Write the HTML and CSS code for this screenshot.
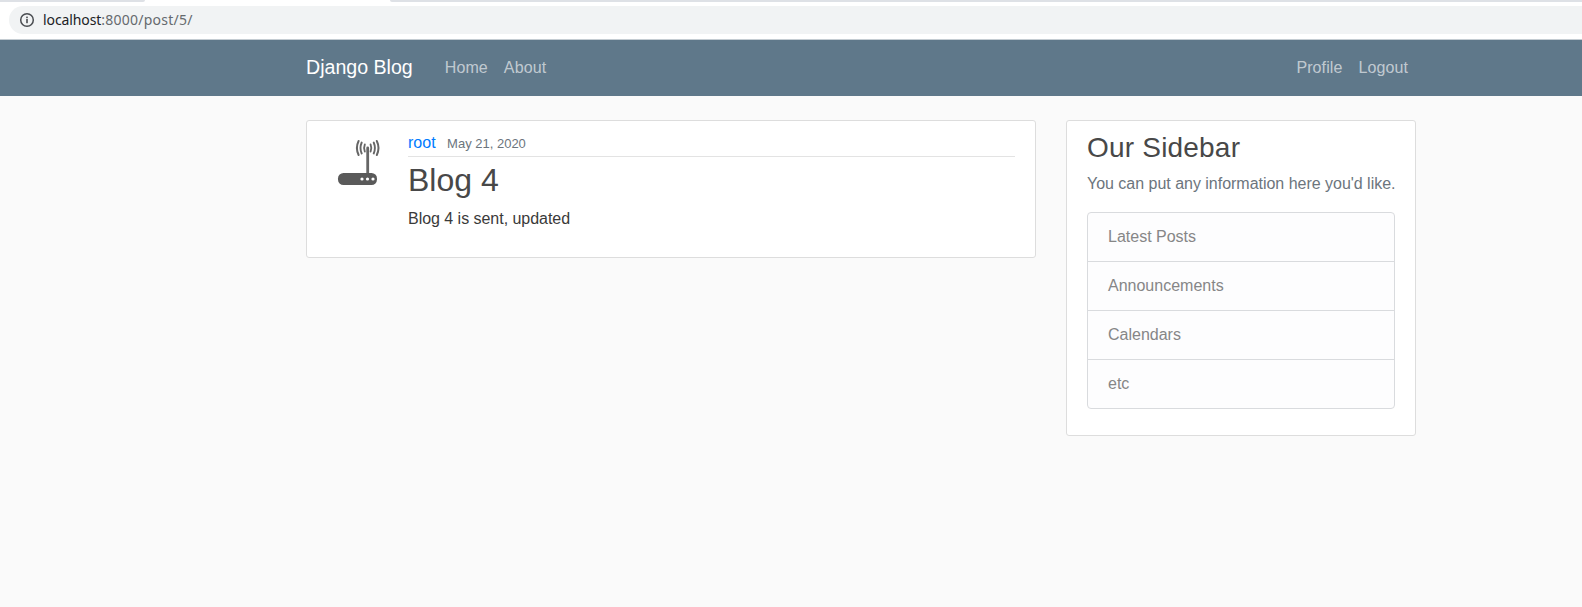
FILE: index.html
```html
<!DOCTYPE html>
<html lang="en">
<head>
<meta charset="utf-8">
<title>Django Blog</title>
<link rel="stylesheet" href="styles.css">
</head>
<body>
<div class="browser">
  <div class="tabstrip"><div class="tab-left"></div><div class="tab-active"></div><div class="tab-right"></div></div>
  <div class="addressbar">
    <svg class="info" width="16" height="16" viewBox="0 0 16 16"><circle cx="8" cy="8" r="6.3" fill="none" stroke="#4a4d51" stroke-width="1.5"/><rect x="7.2" y="7" width="1.6" height="4.2" fill="#4a4d51"/><rect x="7.2" y="4.6" width="1.6" height="1.6" fill="#4a4d51"/></svg>
    <span class="host">localhost</span><span class="path">:8000/post/5/</span>
  </div>
</div>
<header class="navbar">
  <div class="container nav-inner">
    <a class="brand" href="#">Django Blog</a>
    <nav class="nav-links"><a href="#">Home</a><a href="#">About</a></nav>
    <nav class="nav-links nav-right"><a href="#">Profile</a><a href="#">Logout</a></nav>
  </div>
</header>
<main class="container main-grid">
  <article class="section media">
    <svg class="avatar" width="65" height="65" viewBox="0 0 65 65">
      <g fill="none" stroke="#666" stroke-linecap="round">
        <path d="M40.7 17v25" stroke-width="2.8"/>
        <path d="M37.8 13.5q-1.4 3.5 0 7M43.6 13.5q1.4 3.5 0 7" stroke-width="1.9"/>
        <path d="M34.7 11.5q-2.4 5.5 0 11M46.7 11.5q2.4 5.5 0 11" stroke-width="1.9"/>
        <path d="M31.6 10q-3.4 7 0 14M49.8 10q3.4 7 0 14" stroke-width="2"/>
      </g>
      <rect x="11" y="42" width="39" height="12" rx="5.5" fill="#5a5a5a"/>
      <circle cx="35" cy="48" r="1.6" fill="#fff"/><circle cx="40.5" cy="48" r="1.6" fill="#fff"/><circle cx="46" cy="48" r="1.6" fill="#fff"/>
    </svg>
    <div class="media-body">
      <div class="meta"><a class="author" href="#">root</a><small class="date">May 21, 2020</small></div>
      <h2 class="title">Blog 4</h2>
      <p class="content">Blog 4 is sent, updated</p>
    </div>
  </article>
  <aside class="section">
    <h3 class="side-title">Our Sidebar</h3>
    <p class="side-text">You can put any information here you'd like.</p>
    <ul class="list">
      <li>Latest Posts</li>
      <li>Announcements</li>
      <li>Calendars</li>
      <li>etc</li>
    </ul>
  </aside>
</main>
</body>
</html>
```

FILE: styles.css
```css
* { box-sizing: border-box; }
html, body { margin: 0; }
body {
  background: #fafafa;
  color: #3a3a3a;
  font-family: "Liberation Sans", Arial, sans-serif;
  font-size: 16px;
  line-height: 1.5;
  overflow: hidden;
}
a { text-decoration: none; }

.browser { height: 39px; background: #fff; }
.tabstrip { display: flex; height: 2px; }
.tab-left { width: 145px; background: #dee1e6; border-bottom-right-radius: 4px; }
.tab-active { width: 245px; background: #fff; }
.tab-right { flex: 1; background: #dee1e6; border-bottom-left-radius: 4px; }
.addressbar {
  display: flex;
  align-items: center;
  height: 28px;
  margin: 4px 0 0 9px;
  padding-left: 10px;
  background: #f1f3f4;
  border-radius: 14px 0 0 14px;
  font-family: "Noto Sans", sans-serif;
  font-size: 14px;
  line-height: 28px;
}
.info { margin-right: 8px; flex: none; }
.host { color: #202124; letter-spacing: -0.1px; }
.path { color: #666a6e; letter-spacing: 0.25px; }

.navbar {
  height: 57px;
  background: #5f788a;
  border-top: 1px solid #c4ccd2;
}
.container { width: 1140px; margin: 0 0 0 291px; padding: 0 15px; }
.nav-inner { display: flex; align-items: center; height: 56px; }
.brand { color: #fff; font-size: 19.6px; margin-right: 24px; }
.nav-links { display: flex; letter-spacing: 0.1px; }
.nav-links a { color: rgba(255, 255, 255, 0.62); padding: 8px; }
.nav-right { margin-left: auto; }

.main-grid {
  display: grid;
  grid-template-columns: 730px 350px;
  column-gap: 30px;
  align-items: start;
  padding-top: 24px;
}
.section {
  background: #fff;
  border: 1px solid #ddd;
  border-radius: 3px;
  padding: 10px 20px;
  margin-bottom: 20px;
}
.media { display: flex; align-items: flex-start; }
.avatar { flex: none; margin-right: 16px; }
.media-body { flex: 1; min-width: 0; }
.meta { border-bottom: 1px solid #e3e3e3; padding-bottom: 1px; margin-bottom: 4px; }
.author { color: #007bff; margin-right: 11.5px; }
.date { color: #6c757d; font-size: 13px; }
.title { margin: 0 0 8px; color: #484848; font-size: 32px; font-weight: 500; line-height: 1.2; }
.content { margin: 0 0 16px; letter-spacing: -0.03px; }

.side-title { margin: 0 0 7px; color: #484848; font-size: 28px; font-weight: 500; line-height: 1.2; letter-spacing: 0.2px; }
.side-text { margin: 0 0 16px; color: #6c757d; white-space: nowrap; letter-spacing: -0.02px; }
.list {
  list-style: none;
  margin: 0 0 16px;
  padding: 0;
  background: #fdfdfe;
  border: 1px solid #d9dbde;
  border-radius: 4px;
}
.list li { color: #868687; padding: 12px 20px; height: 49px; border-bottom: 1px solid #d9dbde; }
.list li:last-child { border-bottom: 0; height: 48px; }
```
